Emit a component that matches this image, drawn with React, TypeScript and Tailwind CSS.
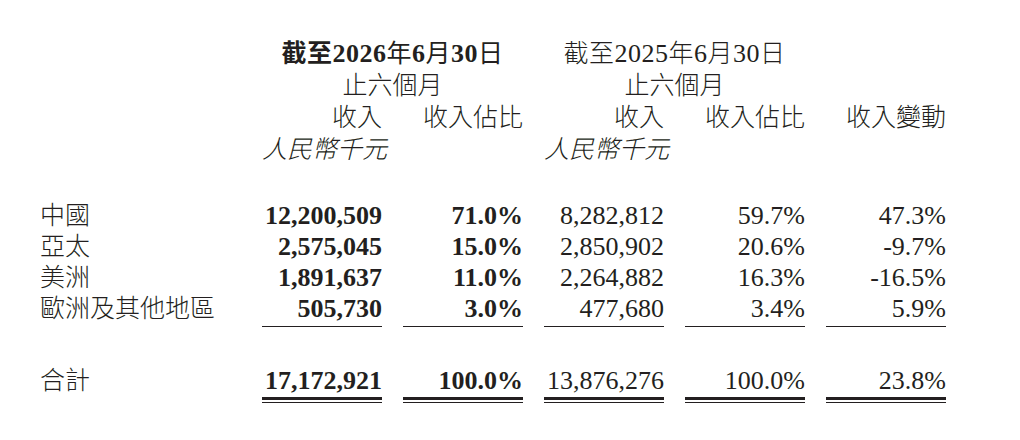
import React from "react";

const serif = { fontFamily: '"Liberation Serif", "Noto Sans CJK TC", serif' };

type Row = { label: string; a: string; b: string; c: string; d: string; e: string };

const rows: Row[] = [
  { label: "中國", a: "12,200,509", b: "71.0%", c: "8,282,812", d: "59.7%", e: "47.3%" },
  { label: "亞太", a: "2,575,045", b: "15.0%", c: "2,850,902", d: "20.6%", e: "-9.7%" },
  { label: "美洲", a: "1,891,637", b: "11.0%", c: "2,264,882", d: "16.3%", e: "-16.5%" },
  { label: "歐洲及其他地區", a: "505,730", b: "3.0%", c: "477,680", d: "3.4%", e: "5.9%" },
];

export default function App() {
  return (
    <div
      className="w-[1020px] h-[440px] bg-white text-[#231f20] text-[25px] font-light pl-[40px] pt-[38px]"
      style={serif}
    >
      <div className="grid grid-cols-[201px_120px_120px_120px_120px_120px] gap-x-[21px]">
        {/* header row 1 */}
        <div className="leading-[32px]" />
        <div className="col-span-2 text-center leading-[32px] whitespace-nowrap tracking-[0.5px]">
          <span className="font-bold">截至</span>
          <span className="font-bold text-[26px]">2026</span>
          <span className="font-normal">年</span>
          <span className="font-bold text-[26px]">6</span>
          <span className="font-normal">月</span>
          <span className="font-bold text-[26px]">30</span>
          <span className="font-normal">日</span>
        </div>
        <div className="col-span-2 text-center leading-[32px] whitespace-nowrap tracking-[0.5px]">
          截至<span className="text-[26px]">2025</span>年<span className="text-[26px]">6</span>月
          <span className="text-[26px]">30</span>日
        </div>
        <div />
        {/* header row 2 */}
        <div className="leading-[32px]" />
        <div className="col-span-2 text-center leading-[32px] whitespace-nowrap">止六個月</div>
        <div className="col-span-2 text-center leading-[32px] whitespace-nowrap">止六個月</div>
        <div />
        {/* header row 3 */}
        <div className="leading-[32px]" />
        <div className="text-right leading-[32px] whitespace-nowrap">收入</div>
        <div className="text-right leading-[32px] whitespace-nowrap">收入佔比</div>
        <div className="text-right leading-[32px] whitespace-nowrap">收入</div>
        <div className="text-right leading-[32px] whitespace-nowrap">收入佔比</div>
        <div className="text-right leading-[32px] whitespace-nowrap">收入變動</div>
        {/* header row 4 */}
        <div className="leading-[32px]" />
        <div className="text-right leading-[32px] italic whitespace-nowrap pr-[8px]">人民幣千元</div>
        <div />
        <div className="text-right leading-[32px] italic whitespace-nowrap pr-[8px]">人民幣千元</div>
        <div />
        <div />
        {/* spacer */}
        <div className="col-span-6 h-[34px]" />
        {rows.map((r, i) => {
          const last = i === rows.length - 1;
          const cell = last
            ? "text-right text-[26px] leading-[31px] whitespace-nowrap border-b border-[#231f20] pb-[2px]"
            : "text-right text-[26px] leading-[31px] whitespace-nowrap";
          return (
            <React.Fragment key={r.label}>
              <div className="leading-[31px] whitespace-nowrap">{r.label}</div>
              <div className={cell + " font-bold"}>{r.a}</div>
              <div className={cell + " font-bold"}>{r.b}</div>
              <div className={cell + " font-normal"}>{r.c}</div>
              <div className={cell + " font-normal"}>{r.d}</div>
              <div className={cell + " font-normal"}>{r.e}</div>
            </React.Fragment>
          );
        })}
        <div className="col-span-6 h-[38px]" />
        <div className="leading-[31px] whitespace-nowrap">合計</div>
        {[
          { v: "17,172,921", b: true },
          { v: "100.0%", b: true },
          { v: "13,876,276", b: false },
          { v: "100.0%", b: false },
          { v: "23.8%", b: false },
        ].map((t, i) => (
          <div key={i} className="border-b border-[#231f20] pb-[2px]">
            <div
              className={
                "text-right text-[26px] leading-[31px] whitespace-nowrap border-b-[3px] border-[#231f20] pb-[1px]" +
                (t.b ? " font-bold" : " font-normal")
              }
            >
              {t.v}
            </div>
          </div>
        ))}
      </div>
    </div>
  );
}
